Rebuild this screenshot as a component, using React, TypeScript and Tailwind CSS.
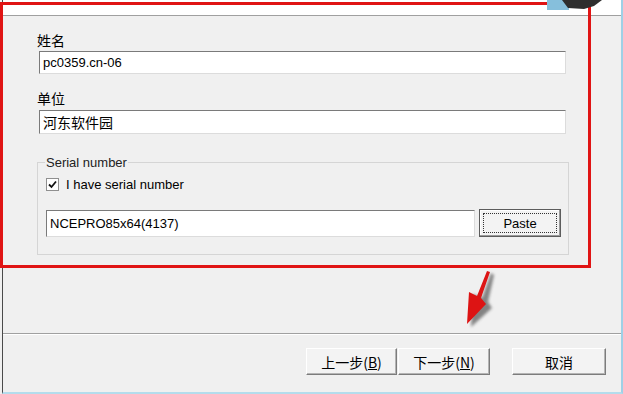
const cjk = "font-['Noto_Sans_CJK_SC',_'Noto_Sans',_sans-serif]";
const latin = "font-['Liberation_Sans',_'Noto_Sans_CJK_SC',_sans-serif]";

function Field({ value, className = "", textClass = "text-[13px]" }: { value: string; className?: string; textClass?: string }) {
  return (
    <div
      className={`flex items-center bg-white border border-t-[#7a7a7a] border-l-[#7a7a7a] border-r-[#dcdcdc] border-b-[#dcdcdc] pl-[3px] ${className}`}
    >
      <span className={`leading-none text-black whitespace-nowrap ${textClass}`}>{value}</span>
    </div>
  );
}

function Btn({ label, className = "" }: { label: React.ReactNode; className?: string }) {
  return (
    <button
      type="button"
      className={`h-[27px] flex items-center justify-center bg-[#f3f3f3] border border-t-white border-l-white border-r-[#7c7c7c] border-b-[#7c7c7c] shadow-[inset_-1px_-1px_0_#b4b4b4] text-[14px] leading-none text-black ${cjk} ${className}`}
    >
      {label}
    </button>
  );
}

export default function App() {
  return (
    <div className={`relative w-[623px] h-[394px] overflow-hidden bg-[#f0f0f0] ${latin}`}>
      <div className="ml-[2px] h-full flex flex-col border-l border-l-[#4a4a4a] border-r-2 border-r-[#9fd0e6] border-b-2 border-b-[#b4dcec]">
        {/* header strip */}
        <div className="h-[16px] shrink-0 bg-white border-b border-[#a0a0a0]" />

        {/* body */}
        <div className="h-[317px] shrink-0 pl-[34px] pt-[16px]">
          <div className={`text-[14px] leading-[17px] text-black ${cjk}`}>姓名</div>
          <Field value="pc0359.cn-06" className="ml-[2px] mt-[2px] w-[527px] h-[23px]" />

          <div className={`mt-[16px] text-[14px] leading-[17px] text-black ${cjk}`}>单位</div>
          <Field value="河东软件园" textClass={`text-[14px] ${cjk}`} className="ml-[2px] mt-[3px] w-[527px] h-[24px]" />

          <fieldset className="mt-[21px] w-[532px] border border-[#d5d5d5] pl-[8px] pr-[7px] pb-[17px] pt-0">
            <legend className="px-[1px] ml-[-1px] text-[13px] leading-[15px] text-[#222]">Serial number</legend>
            <label className="mt-[8px] flex items-center gap-[7px]">
              <span className="w-[13px] h-[13px] flex items-center justify-center bg-white border border-[#8f8f8f]">
                <svg width="9" height="9" viewBox="0 0 9 9">
                  <path d="M1 4.5 L3.5 7 L8 1.5" fill="none" stroke="#111" strokeWidth="1.8" />
                </svg>
              </span>
              <span className="text-[13px] leading-none text-black">I have serial number</span>
            </label>
            <div className="mt-[19px] flex items-start gap-[4px]">
              <Field value="NCEPRO85x64(4137)" className="w-[429px] h-[27px]" />
              <button
                type="button"
                className="w-[82px] h-[28px] -mt-px p-[3px] bg-[#f3f3f3] border border-[#5c5c5c] shadow-[inset_-1px_-1px_0_#9a9a9a,inset_1px_1px_0_#fff]"
              >
                <span className="w-full h-full flex items-center justify-center border border-dotted border-[#333] text-[13px] leading-none text-black">
                  Paste
                </span>
              </button>
            </div>
          </fieldset>
        </div>

        {/* footer */}
        <div className="flex-1 border-t border-t-[#a0a0a0] shadow-[inset_0_1px_0_#fff] pt-[14px] pr-[15px] flex justify-end">
          <div className="flex items-start">
            <Btn label={<span>上一步(<span className="underline">B</span>)</span>} className="w-[91px]" />
            <Btn label={<span>下一步(<span className="underline">N</span>)</span>} className="w-[92px] ml-[1px]" />
            <Btn label="取消" className="w-[94px] ml-[22px]" />
          </div>
        </div>
      </div>

      {/* red annotation box */}
      <div className="absolute left-0 top-[2px] w-[591px] h-[266px] border-[3px] border-[#e01414] pointer-events-none" />

      {/* annotation arrows */}
      <svg className="absolute left-0 top-0 pointer-events-none" width="623" height="394" viewBox="0 0 623 394">
        <defs>
          <filter id="sh" x="-50%" y="-50%" width="200%" height="200%">
            <feGaussianBlur stdDeviation="1.6" />
          </filter>
        </defs>
        <rect x="547" y="0" width="22" height="10" fill="#86bfdc" />
        <polygon points="562,0 602,0 594,6 584,9 568,8" fill="#2e2e2e" />
        <polygon
          points="491,273 485,300 489,306 468,325 470,292 479,296 488,271"
          fill="#555"
          opacity="0.7"
          filter="url(#sh)"
          transform="translate(3,2)"
        />
        <polygon points="490,272 481,298 486,304 467,324 469,292 477,296 487,271" fill="#dd1414" />
      </svg>
    </div>
  );
}
